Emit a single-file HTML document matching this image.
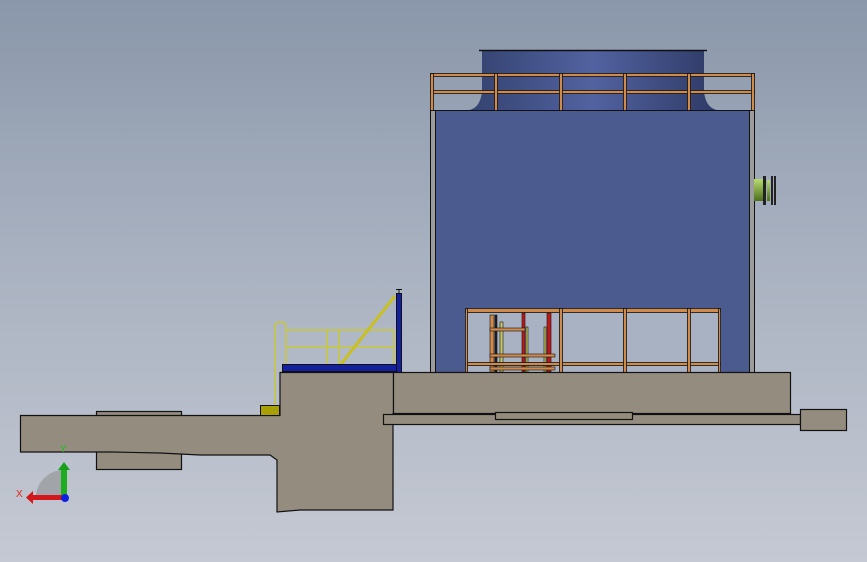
<!DOCTYPE html>
<html><head><meta charset="utf-8"><style>
html,body{margin:0;padding:0;width:867px;height:562px;overflow:hidden}
body{background:linear-gradient(#8a97aa,#a8b1c0 45%,#c5c9d3)}
svg{position:absolute;left:0;top:0}
</style></head><body>
<svg width="867" height="562" viewBox="0 0 867 562" xmlns="http://www.w3.org/2000/svg">
<defs>
<linearGradient id="fan" x1="0" x2="1" y1="0" y2="0">
<stop offset="0" stop-color="#34426f"/><stop offset="0.5" stop-color="#5262a0"/><stop offset="1" stop-color="#2e3a66"/>
</linearGradient>
<linearGradient id="nz" x1="0" x2="0" y1="0" y2="1">
<stop offset="0" stop-color="#b8dc70"/><stop offset="1" stop-color="#4c6e1c"/>
</linearGradient>
</defs>
<!-- fan stack -->
<path d="M482 51 H704 V92 Q706 108 717 110 H469 Q480 108 482 92 Z" fill="url(#fan)"/>
<line x1="479" y1="50.5" x2="707" y2="50.5" stroke="#111" stroke-width="1.5"/>
<!-- tower body -->
<rect x="435" y="110" width="314" height="262" fill="#4b5b8f"/>
<rect x="430.5" y="110.5" width="5" height="262" fill="#9c9c9c" stroke="#111"/>
<rect x="749.5" y="110.5" width="5" height="262" fill="#9c9c9c" stroke="#111"/>
<line x1="430" y1="110.5" x2="754" y2="110.5" stroke="#111"/>
<!-- top railing -->
<g fill="#d08a4a" stroke="#111" stroke-width="0.8">
<rect x="430.5" y="73.5" width="324" height="3"/>
<rect x="430.5" y="90.5" width="324" height="3"/>
<rect x="430.5" y="73.5" width="3" height="37"/>
<rect x="494.5" y="73.5" width="3" height="37"/>
<rect x="559.5" y="73.5" width="3" height="37"/>
<rect x="623.5" y="73.5" width="3" height="37"/>
<rect x="687.5" y="73.5" width="3" height="37"/>
<rect x="751.5" y="73.5" width="3" height="37"/>
</g>
<!-- nozzle -->
<rect x="754" y="179" width="12" height="22" fill="url(#nz)"/>
<rect x="763" y="176" width="3" height="29" fill="#222"/>
<rect x="767" y="180" width="3" height="21" fill="url(#nz)"/>
<rect x="771" y="176" width="2" height="29" fill="#222"/>
<rect x="774" y="176" width="2" height="29" fill="#222"/>
<!-- lower frame opening -->
<rect x="465" y="308" width="256" height="64" fill="#a9b2c3"/>
<g stroke="#111" stroke-width="0.6">
<rect x="490" y="315" width="4" height="57" fill="#d08a4a"/>
<rect x="495" y="315" width="2" height="57" fill="#222"/>
<rect x="500" y="322" width="3" height="50" fill="#c8c860"/>
<rect x="522" y="313" width="3" height="59" fill="#c01818"/>
<rect x="526" y="327" width="2" height="45" fill="#c8c860"/>
<rect x="544" y="327" width="2" height="45" fill="#c8c860"/>
<rect x="547" y="313" width="4" height="59" fill="#c01818"/>
<rect x="490" y="328" width="35" height="3" fill="#d08a4a"/>
<rect x="490" y="354" width="65" height="3" fill="#d08a4a"/>
<rect x="490" y="367" width="65" height="3" fill="#d08a4a"/>
</g>
<g fill="#d08a4a" stroke="#111" stroke-width="0.8">
<rect x="465.5" y="308.5" width="255" height="4"/>
<rect x="465.5" y="362.5" width="255" height="3"/>
<rect x="465.5" y="308.5" width="2" height="64"/>
<rect x="559.5" y="308.5" width="3" height="64"/>
<rect x="623.5" y="308.5" width="3" height="64"/>
<rect x="687.5" y="308.5" width="3" height="64"/>
<rect x="718.5" y="308.5" width="2" height="64"/>
</g>
<!-- platform railing -->
<g stroke="#c9c83c" stroke-width="1.5" fill="none">
<path d="M275 405 V327 Q275 322 280 322 Q286 322 286 327 V364"/>
<line x1="286" y1="330" x2="394" y2="330"/>
<line x1="286" y1="347" x2="394" y2="347"/>
<line x1="327" y1="330" x2="327" y2="364"/>
<line x1="339" y1="330" x2="339" y2="364"/>
<line x1="394" y1="330" x2="394" y2="364"/>
</g>
<line x1="341" y1="364" x2="395" y2="296" stroke="#c9c020" stroke-width="3"/>
<rect x="282.5" y="364.5" width="115" height="7" fill="#1420a0" stroke="#111"/>
<rect x="396.5" y="293.5" width="5" height="79" fill="#1420a0" stroke="#111"/>
<line x1="396" y1="289.5" x2="402" y2="289.5" stroke="#111"/>
<line x1="399" y1="289" x2="399" y2="294" stroke="#111"/>
<!-- concrete -->
<g fill="#958c80" stroke="#111" stroke-width="1.2">
<rect x="96.5" y="411.5" width="85" height="5"/>
<rect x="96.5" y="450.5" width="85" height="19"/>
<path d="M20.5 415.5 H280 V372.5 H393.5 V413.5 H393 V510 H300 L277 512 V460 L270 455 H200 L160 453 L112 452 H20.5 Z"/>
<rect x="393.5" y="372.5" width="397" height="41"/>
<rect x="383.5" y="414.5" width="417" height="10"/>
<rect x="495.5" y="412.5" width="137" height="7"/>
<rect x="800.5" y="409.5" width="46" height="21"/>
</g>
<rect x="260.5" y="405.5" width="19" height="10" fill="#a8a000" stroke="#111"/>
<!-- triad -->
<path d="M36 495 A28 28 0 0 1 62 470 V495 Z" fill="#9a9ca0" opacity="0.8"/>
<rect x="61" y="470" width="6" height="28" fill="#1cae1c"/>
<path d="M58 470 L64 462 L70 470 Z" fill="#18a018"/>
<rect x="32" y="495" width="32" height="5" fill="#d21818"/>
<path d="M33 491 L26 497.5 L33 504 Z" fill="#d21818"/>
<circle cx="65" cy="498" r="4" fill="#1020e0"/>
<text x="60" y="452" font-family="Liberation Sans, sans-serif" font-size="10" fill="#18c018">Y</text>
<text x="16" y="497" font-family="Liberation Sans, sans-serif" font-size="10" fill="#e02020">X</text>
</svg>
</body></html>
